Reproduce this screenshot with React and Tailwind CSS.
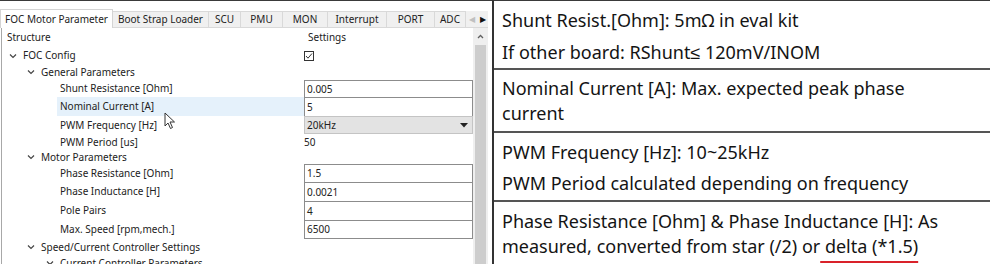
import React from "react";

const Chevron = () => (
  <svg width="8" height="6" viewBox="0 0 8 6" className="shrink-0">
    <polyline points="1,1.5 4,4.5 7,1.5" fill="none" stroke="#444" strokeWidth="1.2" />
  </svg>
);

const rows = [
  { label: "FOC Config", level: 0, exp: true, h: 17, kind: "check" },
  { label: "General Parameters", level: 1, exp: true, h: 16 },
  { label: "Shunt Resistance [Ohm]", level: 2, h: 17, kind: "input", value: "0.005" },
  { label: "Nominal Current [A]", level: 2, h: 19, kind: "input", value: "5", sel: true },
  { label: "PWM Frequency [Hz]", level: 2, h: 18, kind: "combo", value: "20kHz" },
  { label: "PWM Period [us]", level: 2, h: 16, kind: "text", value: "50" },
  { label: "Motor Parameters", level: 1, exp: true, h: 14 },
  { label: "Phase Resistance [Ohm]", level: 2, h: 18, kind: "input", value: "1.5" },
  { label: "Phase Inductance [H]", level: 2, h: 19, kind: "input", value: "0.0021" },
  { label: "Pole Pairs", level: 2, h: 19, kind: "input", value: "4" },
  { label: "Max. Speed [rpm,mech.]", level: 2, h: 19, kind: "input", value: "6500", last: true },
  { label: "Speed/Current Controller Settings", level: 1, exp: true, h: 16 },
  { label: "Current Controller Parameters", level: 2, exp: true, h: 16 },
];

const tabs = [
  { t: "FOC Motor Parameter", w: "w-[113px]", active: true },
  { t: "Boot Strap Loader", w: "w-[96px]" },
  { t: "SCU", w: "w-[32px]" },
  { t: "PMU", w: "w-[42px]" },
  { t: "MON", w: "w-[45px]" },
  { t: "Interrupt", w: "w-[59px]" },
  { t: "PORT", w: "w-[48px]" },
  { t: "ADC", w: "w-[31px]" },
];

function Setting({ r }) {
  if (r.kind === "check")
    return (
      <div className="h-full flex items-center">
        <div className="w-[10px] h-[10px] border border-[#333] bg-white flex items-center justify-center">
          <svg width="8" height="8" viewBox="0 0 8 8">
            <polyline points="1,4 3,6.2 7,1.5" fill="none" stroke="#333" strokeWidth="1" />
          </svg>
        </div>
      </div>
    );
  if (r.kind === "input")
    return (
      <div
        className={
          "h-full flex items-center border-x border-t border-[#8c8c8c] bg-white pl-[2px] " +
          (r.last ? "border-b" : "")
        }
      >
        {r.value}
      </div>
    );
  if (r.kind === "combo")
    return (
      <div className="h-full flex items-center justify-between border border-[#c4c4c4] bg-[#e3e3e3] pl-[2px] pr-[4px]">
        <span>{r.value}</span>
        <svg width="8" height="5" viewBox="0 0 8 5">
          <polygon points="0,0 8,0 4,4.5" fill="#222" />
        </svg>
      </div>
    );
  if (r.kind === "text")
    return <div className="h-full flex items-center">{r.value}</div>;
  return null;
}

export default function App() {
  return (
    <div className="w-[998px] h-[264px] overflow-hidden bg-white relative">
      <div className="h-[1px] bg-[#3a3a3a] w-[990px]" />
      <div className="flex h-[263px]">
        {/* Left panel */}
        <div className="w-[492px] shrink-0 flex flex-col font-['Noto_Sans',sans-serif] text-[10px] text-[#222] relative">
          {/* tab strip */}
          <div className="h-[27px] flex items-end">
            {tabs.map((t) =>
              t.active ? (
                <div key={t.t} className={t.w + " h-[19px] bg-white border-x border-t border-[#d4d4d4] flex items-center justify-center shrink-0"}>
                  {t.t}
                </div>
              ) : (
                <div key={t.t} className={t.w + " h-[17px] bg-[#f0f0f0] border-r border-t border-b border-[#d9d9d9] flex items-center justify-center shrink-0 overflow-hidden"}>
                  {t.t}
                </div>
              )
            )}
            <div className="h-[17px] w-[11px] flex items-center justify-center border-b border-[#d9d9d9] bg-[#f0f0f0] text-[#c0c0c0] text-[8px]">◀</div>
            <div className="h-[17px] w-[11px] flex items-center justify-center border-b border-[#d9d9d9] bg-[#f0f0f0] text-[#111] text-[8px]">▶</div>
            <div className="flex-1" />
          </div>
          {/* content box */}
          <div className="flex-1 flex border-l border-[#a8a8a8] ml-[1px] overflow-hidden">
            <div className="w-[471px] shrink-0 flex flex-col">
              <div className="h-[19px] shrink-0 flex items-center">
                <div className="w-[302px] pl-[5px]">Structure</div>
                <div className="pl-[4px]">Settings</div>
              </div>
              {rows.map((r) => (
                <div key={r.label} className="flex shrink-0" style={{ height: r.h }}>
                  <div className="w-[302px] flex items-center h-full">
                    <div
                      className={
                        "h-full flex items-center " +
                        (r.level === 0 ? "pl-[7px]" : r.level === 1 ? "pl-[25px]" : "pl-[44px]")
                      }
                    >
                      <div className="w-[14px] flex items-center">{r.exp ? <Chevron /> : null}</div>
                    </div>
                    <div
                      className={
                        "h-full flex items-center flex-1 " +
                        (r.sel ? "bg-[#e5f1fb] -ml-[3px] pl-[3px]" : "")
                      }
                    >
                      {r.label}
                    </div>
                  </div>
                  <div className="w-[169px] h-full">
                    <Setting r={r} />
                  </div>
                </div>
              ))}
            </div>
            {/* scrollbar */}
            <div className="w-[15px] shrink-0 bg-[#efefef] flex flex-col items-center">
              <div className="h-[17px] flex items-center justify-center">
                <svg width="7" height="5" viewBox="0 0 7 5">
                  <polyline points="1,4 3.5,1.5 6,4" fill="none" stroke="#606060" strokeWidth="1.3" />
                </svg>
              </div>
              <div className="flex-1 w-[11px] bg-[#cdcdcd]" />
            </div>
          </div>
          {/* mouse cursor */}
          <svg className="absolute left-[164px] top-[111px]" width="12" height="18" viewBox="0 0 12 18">
            <path d="M1 1 L1 14 L4 11 L6.5 16.5 L8.5 15.5 L6 10 L10.5 10 Z" fill="white" stroke="#333" strokeWidth="1" strokeLinejoin="round" />
          </svg>
        </div>
        {/* separator */}
        <div className="w-[2px] bg-[#333] shrink-0 -mt-px" />
        {/* Right panel */}
        <div className="w-[496px] shrink-0 flex flex-col font-['Noto_Sans',sans-serif] text-[18px] leading-[25px] text-[#141414]">
          <div className="h-[67px] shrink-0 pl-[8px] pt-[7px]">
            <p>Shunt Resist.[Ohm]: 5mΩ in eval kit</p>
            <p className="mt-[7px]">If other board: RShunt≤ 120mV/INOM</p>
          </div>
          <div className="h-[63px] shrink-0 border-t-2 border-[#555] pl-[8px] pt-[6px]">
            <p>Nominal Current [A]: Max. expected peak phase<br />current</p>
          </div>
          <div className="h-[69px] shrink-0 border-t-2 border-[#555] pl-[8px] pt-[7px]">
            <p>PWM Frequency [Hz]: 10~25kHz</p>
            <p className="mt-[6px]">PWM Period calculated depending on frequency</p>
          </div>
          <div className="h-[64px] shrink-0 border-t-2 border-[#555] pl-[8px] pt-[7px]">
            <p>Phase Resistance [Ohm] &amp; Phase Inductance [H]: As</p>
            <p>
              measured, converted from star (/2) or
              <span className="underline decoration-[#d9222a] decoration-[1.5px] underline-offset-[8px]"> delta (*1.5)</span>
            </p>
          </div>
          <div className="border-t-2 border-[#555]" />
        </div>
      </div>
    </div>
  );
}
